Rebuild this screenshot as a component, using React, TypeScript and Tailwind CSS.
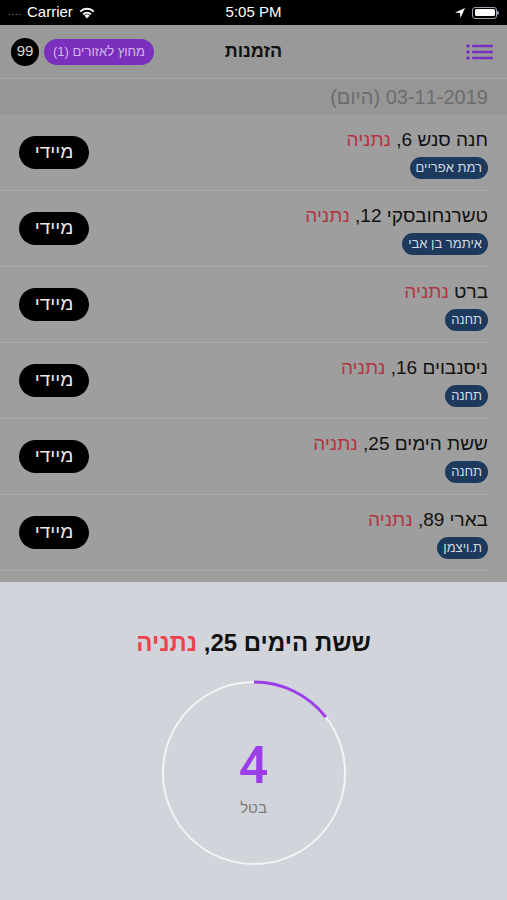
import React from 'react';

const rows = [
  { street: 'חנה סנש 6,', city: 'נתניה', tag: 'רמת אפריים' },
  { street: 'טשרנחובסקי 12,', city: 'נתניה', tag: 'איתמר בן אבי' },
  { street: 'ברט', city: 'נתניה', tag: 'תחנה' },
  { street: 'ניסנבוים 16,', city: 'נתניה', tag: 'תחנה' },
  { street: 'ששת הימים 25,', city: 'נתניה', tag: 'תחנה' },
  { street: 'בארי 89,', city: 'נתניה', tag: 'ת.ויצמן' },
];

const font = { fontFamily: '"Liberation Sans", "DejaVu Sans", sans-serif' };

function StatusBar() {
  return (
    <div className="h-[25px] bg-black text-white flex items-center justify-between px-[8px] text-[15px]">
      <div className="flex items-center gap-[5px] w-[150px]">
        <span className="text-[9px] tracking-[1px] text-gray-400">....</span>
        <span>Carrier</span>
        <svg width="18" height="13" viewBox="0 0 18 13">
          <path d="M9 12.5 L6.3 9.6 A3.9 3.9 0 0 1 11.7 9.6 Z" fill="white" />
          <path d="M4.4 7.7 A6.6 6.6 0 0 1 13.6 7.7 L12.3 9 A4.8 4.8 0 0 0 5.7 9 Z" fill="white" />
          <path d="M1.6 4.9 A10.5 10.5 0 0 1 16.4 4.9 L15 6.3 A8.5 8.5 0 0 0 3 6.3 Z" fill="white" />
        </svg>
      </div>
      <span className="font-medium">5:05 PM</span>
      <div className="flex items-center justify-end gap-[6px] w-[150px]">
        <svg width="12" height="12" viewBox="0 0 12 12">
          <path d="M11 1 L1 5.5 L6 6 L6.5 11 Z" fill="white" />
        </svg>
        <div className="flex items-center">
          <div className="w-[25px] h-[12px] rounded-[3px] border border-gray-400 p-[1.5px]">
            <div className="w-full h-full bg-white rounded-[1.5px]" />
          </div>
          <div className="w-[2px] h-[4px] bg-gray-400 rounded-r-sm" />
        </div>
      </div>
    </div>
  );
}

function NavBar() {
  return (
    <div className="h-[54px] bg-[#999999] flex items-center px-[11px] relative border-b border-[#a4a4a4]">
      <div className="flex items-center gap-[5px]">
        <div className="w-[28px] h-[28px] rounded-full bg-black text-[#d8d8d8] text-[15px] flex items-center justify-center">99</div>
        <div dir="rtl" className="h-[26px] px-[9px] rounded-full bg-[#7a2fbd] text-[#d5b8f0] text-[13px] flex items-center">מחוץ לאזורים (1)</div>
      </div>
      <div className="absolute left-1/2 -translate-x-1/2 text-[18px] font-bold text-[#111]">הזמנות</div>
      <div className="ml-auto mr-[3px]">
        <svg width="27" height="16" viewBox="0 0 27 16">
          {[2, 8, 14].map((y) => (
            <g key={y}>
              <circle cx="2" cy={y} r="1.8" fill="#7b2fc0" />
              <rect x="6" y={y - 1.3} width="21" height="2.6" rx="1" fill="#7b2fc0" />
            </g>
          ))}
        </svg>
      </div>
    </div>
  );
}

function Row({ street, city, tag }: { street: string; city: string; tag: string }) {
  return (
    <div className="h-[76px] flex flex-col">
      <div dir="rtl" className="flex-1 flex items-center pr-[19px] pl-[19px]">
        <div className="flex flex-col items-start gap-[6px] pt-[2px]">
          <div className="text-[19px] text-[#111] leading-[22px]">
            {street} <span className="text-[#b5333f]">{city}</span>
          </div>
          <div className="h-[22px] px-[6px] rounded-full bg-[#1d3a5e] text-[#d3dae4] text-[13px] flex items-center">{tag}</div>
        </div>
        <div className="mr-auto w-[70px] h-[33px] rounded-full bg-black text-[#e8e8e8] text-[19px] flex items-center justify-center">מיידי</div>
      </div>
      <div className="h-[1px] bg-[#ababab] mr-[19px]" />
    </div>
  );
}

function Progress() {
  const r = 91;
  const c = 2 * Math.PI * r;
  const frac = 52 / 360;
  return (
    <div className="relative w-[186px] h-[186px]">
      <svg width="186" height="186" viewBox="0 0 186 186" className="absolute inset-0">
        <circle cx="93" cy="93" r={r} fill="none" stroke="#f3f4f6" strokeWidth="2" />
        <circle
          cx="93"
          cy="93"
          r={r}
          fill="none"
          stroke="#9b3de8"
          strokeWidth="3"
          strokeDasharray={`${c * frac} ${c}`}
          transform="rotate(-90 93 93)"
        />
      </svg>
      <div className="absolute inset-0 flex flex-col items-center pt-[60px]">
        <div className="text-[52px] leading-[52px] text-[#9b3de8] font-medium" style={{ fontFamily: 'Roboto, sans-serif' }}>4</div>
        <div className="text-[15px] leading-[18px] text-[#7a7a7a] mt-[7px]">בטל</div>
      </div>
    </div>
  );
}

export default function App() {
  return (
    <div className="w-[507px] h-[900px] overflow-hidden flex flex-col bg-[#9e9e9e]" style={font}>
      <StatusBar />
      <NavBar />
      <div dir="rtl" className="h-[36px] bg-[#969696] flex items-center pr-[19px] text-[20px] text-[#6c6c6c]">
        03-11-2019 (היום)
      </div>
      <div className="flex flex-col">
        {rows.map((r, i) => (
          <Row key={i} {...r} />
        ))}
      </div>
      <div className="h-[11px]" />
      <div className="flex-1 bg-[#d1d5db] flex flex-col items-center">
        <div dir="rtl" className="mt-[48px] text-[24px] font-bold text-[#111] leading-[26px]">
          ששת הימים 25, <span className="text-[#f0424d]">נתניה</span>
        </div>
        <div className="mt-[24px]">
          <Progress />
        </div>
      </div>
    </div>
  );
}
